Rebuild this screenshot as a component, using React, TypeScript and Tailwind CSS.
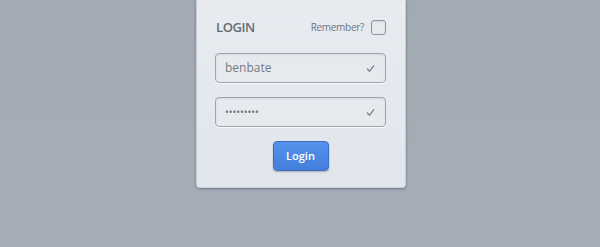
import React from "react";

const Check: React.FC = () => (
  <svg className="w-[9px] h-[9px] text-[#7c828a]" viewBox="0 0 10 10" fill="none" stroke="currentColor">
    <path d="M1.5 5.5 L4 8 L8.5 2" strokeWidth="1.5" strokeLinecap="round" strokeLinejoin="round" />
  </svg>
);

const App: React.FC = () => {
  return (
    <div className="w-[600px] h-[247px] bg-gradient-to-b from-[#a2aab4] to-[#a7aeb8] overflow-hidden font-['Open_Sans',sans-serif]">
      <div className="ml-[196px] w-[210px] h-[188px] bg-gradient-to-b from-[#e8ecf1] to-[#e1e6ec] rounded-b-[4px] border border-t-0 border-[#c9cfd6] shadow-[0_1px_3px_rgba(40,50,65,0.45)] pl-[18px] pr-[19px]">
        {/* header */}
        <div className="flex items-center justify-between pt-[19px] h-[36px]">
          <span className="text-[13px] font-semibold text-[#666b71] tracking-[-0.4px] pl-px">LOGIN</span>
          <div className="flex items-center gap-[7px]">
            <span className="text-[10px] text-[#6e747b] tracking-[-0.3px]">Remember?</span>
            <div className="w-[15px] h-[15px] rounded-[3px] border border-[#8e959d] bg-[#e6eaef] shadow-[inset_0_1px_1px_rgba(0,0,0,0.08)]" />
          </div>
        </div>

        {/* inputs */}
        <div className="mt-[17px] flex flex-col gap-[14px]">
          <div className="h-[30px] rounded-[4px] border border-[#9ea5ad] bg-[#e6eaef] shadow-[inset_0_1px_2px_rgba(0,0,0,0.08),0_1px_0_rgba(255,255,255,0.7)] flex items-center justify-between pl-[9px] pr-[10px]">
            <span className="text-[12px] text-[#757b82]">benbate</span>
            <Check />
          </div>
          <div className="h-[30px] rounded-[4px] border border-[#9ea5ad] bg-[#e6eaef] shadow-[inset_0_1px_2px_rgba(0,0,0,0.08),0_1px_0_rgba(255,255,255,0.7)] flex items-center justify-between pl-[9px] pr-[10px]">
            <span className="text-[10px] text-[#666c73] tracking-[0px]">•••••••••</span>
            <Check />
          </div>
        </div>

        {/* button */}
        <div className="mt-[14px] flex justify-center">
          <button className="w-[56px] h-[30px] rounded-[4px] bg-gradient-to-b from-[#5592ea] to-[#437fdc] border border-[#3a6fc4] text-white text-[11px] font-semibold shadow-[0_1px_2px_rgba(0,0,0,0.25)]">
            Login
          </button>
        </div>
      </div>
    </div>
  );
};

export default App;
